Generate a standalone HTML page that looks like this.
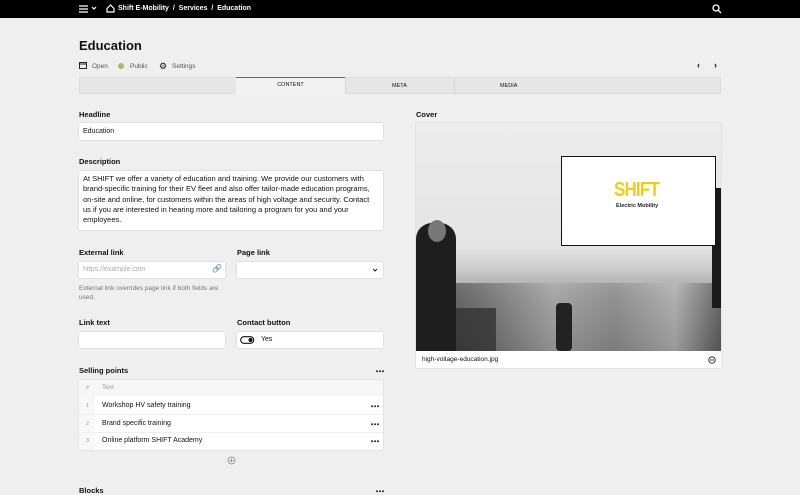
<!DOCTYPE html>
<html><head><meta charset="utf-8"><style>
*{box-sizing:border-box;margin:0;padding:0}
body{width:800px;height:493px;overflow:hidden;background:#efefef;font-family:"Liberation Sans",sans-serif;color:#111;position:relative}
.a{position:absolute}
.top{left:0;top:0;width:800px;height:18px;background:#000;color:#fff;font-size:7px;font-weight:bold}
.lbl{font-size:7.5px;font-weight:bold}
.inp{background:#fff;box-shadow:0 0 1px rgba(0,0,0,.3);font-size:7px}
.small{font-size:6.5px;color:#333}
</style></head><body>
<div class="a top">
 <svg class="a" style="left:79px;top:5px" width="10" height="8"><path d="M0 1h9M0 4h9M0 7h9" stroke="#fff" stroke-width="1.3"/></svg>
 <svg class="a" style="left:91px;top:6px" width="6" height="5"><path d="M1 1l2 2 2-2" stroke="#fff" fill="none" stroke-width="1.2"/></svg>
 <svg class="a" style="left:106px;top:4px" width="9" height="9"><path d="M1 4.5L4.5 1 8 4.5V8H1z" stroke="#fff" fill="none" stroke-width="1.2"/></svg>
 <span class="a" style="left:118px;top:5px">Shift E-Mobility &nbsp;/&nbsp; Services &nbsp;/&nbsp; Education</span>
 <svg class="a" style="left:712px;top:4px" width="10" height="10"><circle cx="4" cy="4" r="3" stroke="#fff" fill="none" stroke-width="1.3"/><path d="M6.3 6.3L9 9" stroke="#fff" stroke-width="1.3"/></svg>
</div>
<div class="a" style="left:79px;top:38px;font-size:13px;font-weight:bold">Education</div>
<svg class="a" style="left:79px;top:62px" width="8" height="7"><rect x=".5" y=".5" width="7" height="6" fill="none" stroke="#222"/><path d="M0 2h8" stroke="#222"/></svg>
<span class="a small" style="left:92px;top:63px;color:#555">Open</span>
<div class="a" style="left:118px;top:63px;width:6px;height:6px;border-radius:50%;background:#a5be5b"></div>
<span class="a small" style="left:130px;top:63px;color:#555">Public</span>
<div class="a" style="left:159px;top:61px;font-size:9px">⚙</div>
<span class="a small" style="left:172px;top:63px;color:#555">Settings</span>
<span class="a" style="left:697px;top:60px;font-size:9px;font-weight:bold">‹</span>
<span class="a" style="left:714px;top:60px;font-size:9px;font-weight:bold">›</span>
<div class="a" style="left:79px;top:77px;width:642px;height:17px;background:#e6e6e6;border:1px solid #ddd"></div>
<div class="a" style="left:236px;top:77px;width:109px;height:17px;background:#f2f2f2;border-top:1.5px solid #666;font-size:5.5px;text-align:center;line-height:15px;color:#111">CONTENT</div>
<div class="a" style="left:345px;top:77px;width:1px;height:17px;background:#d6d6d6"></div>
<div class="a" style="left:454px;top:77px;width:1px;height:17px;background:#d6d6d6"></div>
<span class="a" style="left:392px;top:83px;font-size:5.5px">META</span>
<span class="a" style="left:500px;top:83px;font-size:5.5px">MEDIA</span>

<div class="a lbl" style="left:79px;top:110px">Headline</div>
<div class="a inp" style="left:79px;top:123px;width:304px;height:17px;padding:5px 4px">Education</div>
<div class="a lbl" style="left:79px;top:157px">Description</div>
<div class="a inp" style="left:79px;top:171px;width:304px;height:59px;padding:3px 4px;line-height:10.3px;font-size:7.5px">At SHIFT we offer a variety of education and training. We provide our customers with brand-specific training for their EV fleet and also offer tailor-made education programs, on-site and online, for customers within the areas of high voltage and security. Contact us if you are interested in hearing more and tailoring a program for you and your employees.</div>

<div class="a lbl" style="left:79px;top:248px">External link</div>
<div class="a inp" style="left:79px;top:262px;width:146px;height:16px;padding:4px;color:#aaa">https://example.com</div>
<span class="a" style="left:212px;top:264px;font-size:8px">🔗</span>
<div class="a" style="left:79px;top:284px;font-size:6.5px;color:#777;line-height:9px;width:150px">External link overrides page link if both fields are used.</div>
<div class="a lbl" style="left:237px;top:248px">Page link</div>
<div class="a inp" style="left:237px;top:262px;width:146px;height:16px"></div>
<svg class="a" style="left:372px;top:268px" width="6" height="5"><path d="M1 1l2 2 2-2" stroke="#222" fill="none" stroke-width="1.1"/></svg>

<div class="a lbl" style="left:79px;top:318px">Link text</div>
<div class="a inp" style="left:79px;top:332px;width:146px;height:16px"></div>
<div class="a lbl" style="left:237px;top:318px">Contact button</div>
<div class="a inp" style="left:237px;top:332px;width:146px;height:16px"></div>
<svg class="a" style="left:240px;top:336px" width="16" height="8"><rect x=".7" y=".7" width="13" height="6.6" rx="3.3" fill="none" stroke="#111" stroke-width="1.1"/><circle cx="10.5" cy="4" r="2" fill="#111"/></svg>
<span class="a" style="left:261px;top:336px;font-size:7px">Yes</span>

<div class="a lbl" style="left:79px;top:366px">Selling points</div>
<svg class="a" style="left:376px;top:370px" width="8" height="3"><circle cx="1" cy="1.2" r="1" fill="#222"/><circle cx="4" cy="1.2" r="1" fill="#222"/><circle cx="7" cy="1.2" r="1" fill="#222"/></svg>
<div class="a" style="left:79px;top:380px;width:304px;height:70px;background:#fff;box-shadow:0 0 1px rgba(0,0,0,.25)"></div>
<div class="a" style="left:79px;top:380px;width:304px;height:16px;background:#f6f6f6"></div>
<div class="a" style="left:79px;top:396px;width:16px;height:54px;background:#f7f7f7"></div>
<span class="a" style="left:86px;top:385px;font-size:5.5px;color:#999">#</span>
<span class="a" style="left:102px;top:384px;font-size:6.5px;color:#999">Text</span>
<div class="a" style="left:79px;top:414px;width:304px;height:1px;background:#eee"></div>
<div class="a" style="left:79px;top:432px;width:304px;height:1px;background:#eee"></div>
<span class="a" style="left:86px;top:403px;font-size:5.5px;color:#999">1</span>
<span class="a" style="left:102px;top:402px;font-size:7px">Workshop HV safety training</span>
<svg class="a" style="left:371px;top:405px" width="8" height="3"><circle cx="1" cy="1.2" r="1" fill="#222"/><circle cx="4" cy="1.2" r="1" fill="#222"/><circle cx="7" cy="1.2" r="1" fill="#222"/></svg>
<span class="a" style="left:86px;top:421px;font-size:5.5px;color:#999">2</span>
<span class="a" style="left:102px;top:420px;font-size:7px">Brand specific training</span>
<svg class="a" style="left:371px;top:423px" width="8" height="3"><circle cx="1" cy="1.2" r="1" fill="#222"/><circle cx="4" cy="1.2" r="1" fill="#222"/><circle cx="7" cy="1.2" r="1" fill="#222"/></svg>
<span class="a" style="left:86px;top:438px;font-size:5.5px;color:#999">3</span>
<span class="a" style="left:102px;top:437px;font-size:7px">Online platform SHIFT Academy</span>
<svg class="a" style="left:371px;top:440px" width="8" height="3"><circle cx="1" cy="1.2" r="1" fill="#222"/><circle cx="4" cy="1.2" r="1" fill="#222"/><circle cx="7" cy="1.2" r="1" fill="#222"/></svg>
<svg class="a" style="left:227px;top:456px" width="9" height="9"><circle cx="4.5" cy="4.5" r="3.5" fill="none" stroke="#888" stroke-width=".8"/><path d="M4.5 2.5v4M2.5 4.5h4" stroke="#888" stroke-width=".8"/></svg>
<div class="a lbl" style="left:79px;top:486px">Blocks</div>
<svg class="a" style="left:376px;top:490px" width="8" height="3"><circle cx="1" cy="1.2" r="1" fill="#222"/><circle cx="4" cy="1.2" r="1" fill="#222"/><circle cx="7" cy="1.2" r="1" fill="#222"/></svg>

<div class="a lbl" style="left:416px;top:110px">Cover</div>
<div class="a" style="left:416px;top:123px;width:305px;height:245px;background:#fff;box-shadow:0 0 1px rgba(0,0,0,.25);overflow:hidden">
 <div class="a" style="left:0;top:0;width:305px;height:228px;background:linear-gradient(180deg,#ececec 0%,#e4e4e4 55%,#c8c8c8 65%,#999 78%,#666 100%)"></div>
 <div class="a" style="left:0;top:160px;width:305px;height:68px;background:linear-gradient(90deg,#222 0%,#555 20%,#aaa 45%,#888 65%,#bbb 85%,#444 100%);opacity:.6"></div>
 <div class="a" style="left:0;top:100px;width:40px;height:128px;background:#1e1e1e;border-radius:16px 16px 0 0"></div>
 <div class="a" style="left:12px;top:97px;width:18px;height:22px;background:#777;border-radius:50%"></div>
 <div class="a" style="left:140px;top:180px;width:16px;height:48px;background:#222;border-radius:4px"></div>
 <div class="a" style="left:40px;top:185px;width:40px;height:43px;background:#333;opacity:.8"></div>
 <div class="a" style="left:296px;top:65px;width:9px;height:120px;background:#1a1a1a"></div>
 <div class="a" style="left:145px;top:33px;width:155px;height:90px;background:#fff;border:1.5px solid #111"></div>
 <div class="a" style="left:198px;top:56px;font-size:20px;color:#f0cb18;font-weight:bold;letter-spacing:-1px;transform:scaleX(.85);transform-origin:left">SHIFT</div>
 <div class="a" style="left:200px;top:80px;font-size:5.5px;font-weight:bold;color:#222">Electric Mobility</div>
 <div class="a" style="left:6px;top:233px;font-size:6.5px">high-voltage-education.jpg</div>
 <svg class="a" style="left:292px;top:233px" width="8" height="8"><circle cx="4" cy="4" r="3.2" fill="none" stroke="#222" stroke-width=".9"/><path d="M2 4h4" stroke="#222" stroke-width=".9"/></svg>
</div>
</body></html>
